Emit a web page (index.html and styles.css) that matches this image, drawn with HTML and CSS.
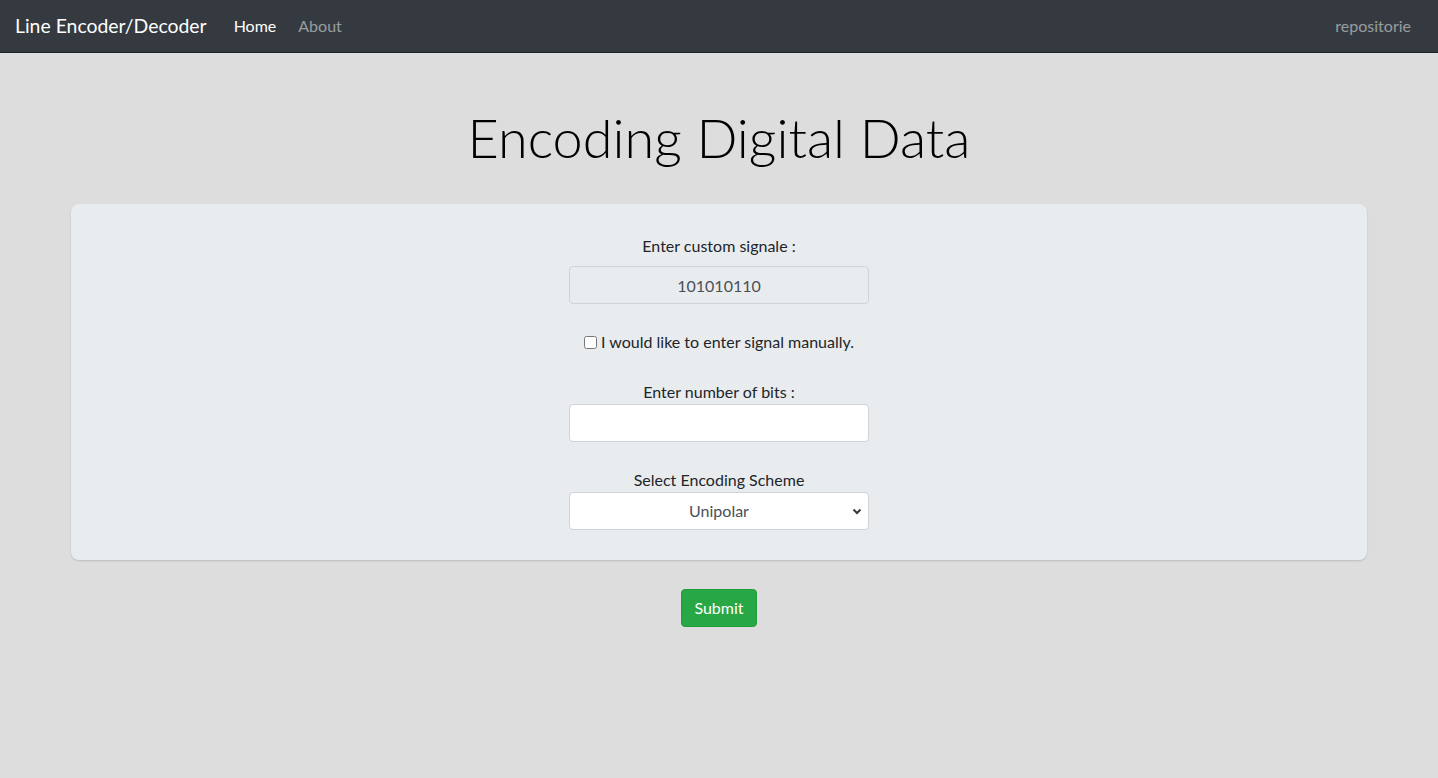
FILE: index.html
```html
<!DOCTYPE html>
<html lang="en">
<head>
<meta charset="utf-8">
<title>Line Encoder/Decoder</title>
<link rel="stylesheet" href="styles.css">
</head>
<body>
<nav class="navbar">
  <a class="brand" href="#">Line Encoder/Decoder</a>
  <ul class="nav-links">
    <li><a class="nav-link active" href="#">Home</a></li>
    <li><a class="nav-link" href="#">About</a></li>
  </ul>
  <a class="nav-link repo" href="#">repositorie</a>
</nav>
<main class="page">
  <h1 class="title">Encoding Digital Data</h1>
  <form class="panel">
    <div class="field">
      <label class="label">Enter custom signale :</label>
      <input class="control readonly" type="text" value="101010110" readonly>
    </div>
    <div class="check-row">
      <input type="checkbox" id="manual" class="check">
      <label for="manual">I would like to enter signal manually.</label>
    </div>
    <div class="field tight">
      <label class="label">Enter number of bits :</label>
      <input class="control" type="text">
    </div>
    <div class="field tight last">
      <label class="label">Select Encoding Scheme</label>
      <div class="select-wrap">
        <select class="control select">
          <option>Unipolar</option>
        </select>
        <svg class="chev" width="12" height="12" viewBox="0 0 12 12"><path d="M2.5 4.5 L6 8 L9.5 4.5" fill="none" stroke="#343a40" stroke-width="2"/></svg>
      </div>
    </div>
  </form>
  <div class="actions">
    <button class="btn" type="button">Submit</button>
  </div>
</main>
</body>
</html>
```
FILE: styles.css
```css
* { box-sizing: border-box; }
html, body { margin: 0; padding: 0; }
body {
  background: #dddddd;
  font-family: "Segoe UI", Lato, "Open Sans", sans-serif;
  font-size: 16px;
  line-height: 1.5;
  color: #212529;
}
.navbar {
  height: 53px;
  background: #343a40;
  border-bottom: 1px solid #1d2226;
  display: flex;
  align-items: center;
  padding: 0 16px 0 15px;
}
.brand {
  color: #fff;
  font-size: 19.4px;
  text-decoration: none;
  margin-right: 16px;
  line-height: 1.5;
}
.nav-links {
  list-style: none;
  margin: 0;
  padding: 0;
  display: flex;
  flex: 1;
}
.nav-link {
  display: block;
  padding: 8px 11px;
  color: rgba(255,255,255,0.5);
  text-decoration: none;
  font-size: 16px;
}
.nav-link.active { color: #fff; }
.page {
  padding-top: 52px;
}
.title {
  margin: 0 0 34px;
  text-align: center;
  font-weight: 300;
  font-size: 54px;
  line-height: 65px;
  color: #000;
}
.panel {
  width: 1296px;
  margin: 0 auto;
  background: #e9ecef;
  border-radius: 8px;
  box-shadow: 0 1px 2px rgba(0,0,0,0.15);
  padding: 30px 0;
  display: flex;
  flex-direction: column;
  align-items: center;
}
.field {
  display: flex;
  flex-direction: column;
  align-items: center;
  width: 300px;
}
.label { margin-bottom: 8px; }
.field.tight .label { margin-bottom: 0; }
.control {
  width: 300px;
  height: 38px;
  border: 1px solid #ced4da;
  border-radius: 4px;
  background: #fff;
  font: inherit;
  color: #495057;
  text-align: center;
  text-align-last: center;
  padding: 6px 12px;
}
.control.readonly { background: #e9ecef; }
.check-row {
  display: flex;
  align-items: center;
  margin-top: 26px;
  margin-bottom: 26px;
}
.check { margin: 0 4px 0 0; width: 13px; height: 13px; }
.field.last { margin-top: 26px; }
.select-wrap { position: relative; }
.select {
  appearance: none;
  -webkit-appearance: none;
}
.chev {
  position: absolute;
  right: 6px;
  top: 13px;
  pointer-events: none;
}
.actions {
  display: flex;
  justify-content: center;
  margin-top: 29px;
}
.btn {
  background: #28a745;
  border: 1px solid #1e9e3a;
  border-radius: 4px;
  color: #fff;
  font: inherit;
  height: 38px;
  padding: 6px 12px;
}
```
